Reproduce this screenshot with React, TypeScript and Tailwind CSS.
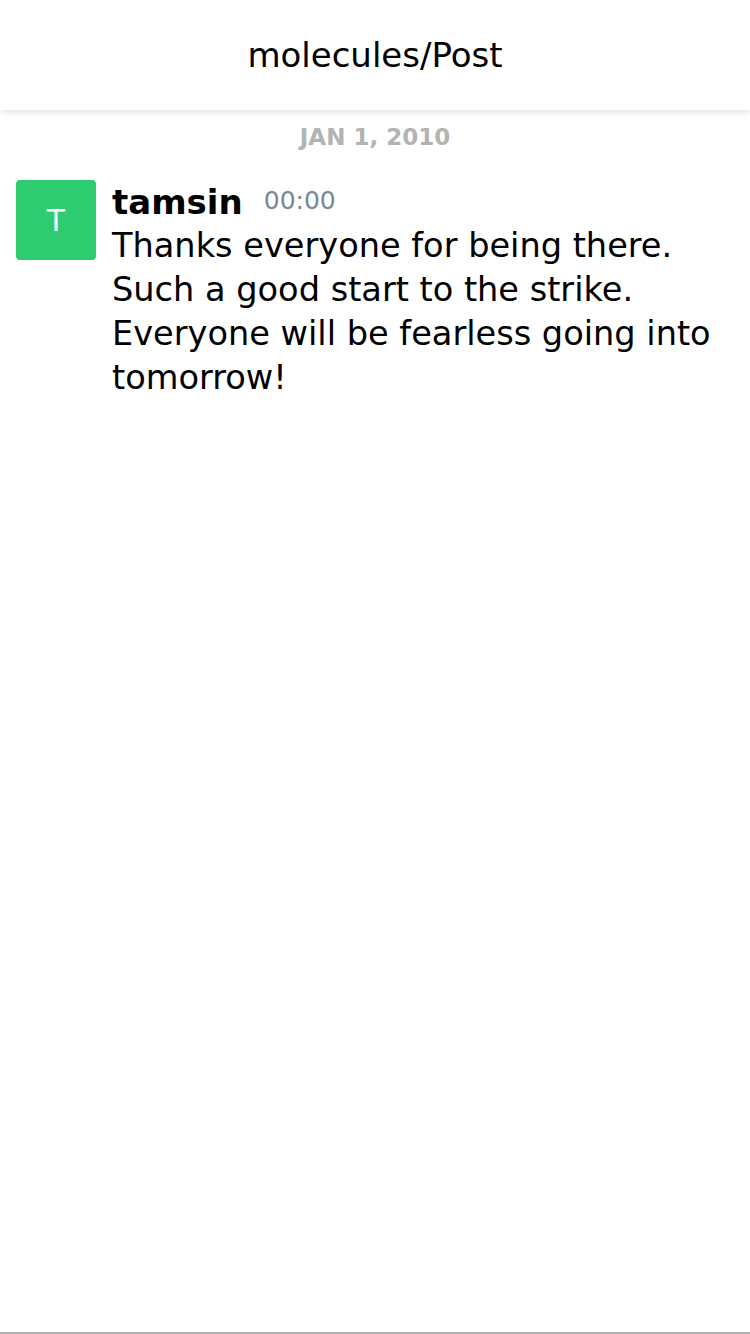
import React from 'react';

const post = {
  author: 'tamsin',
  time: '00:00',
  date: 'JAN 1, 2010',
  body: 'Thanks everyone for being there. Such a good start to the strike. Everyone will be fearless going into tomorrow!',
};

const Header: React.FC<{ title: string }> = ({ title }) => (
  <div className="h-[110px] flex items-center justify-center bg-white shadow-[0_2px_6px_rgba(0,0,0,0.12)] relative z-10">
    <span className="text-[34px] text-black">{title}</span>
  </div>
);

const Post: React.FC = () => (
  <div className="flex gap-4 pl-4 pr-4 pt-[28px]">
    <div className="w-20 h-20 shrink-0 rounded-[4px] bg-[#2ecc71] flex items-center justify-center text-white text-[30px]">
      {post.author.charAt(0).toUpperCase()}
    </div>
    <div className="flex-1 min-w-0">
      <div className="flex items-center gap-[21px] h-[44px]">
        <span className="text-[34px] font-bold text-black leading-[44px]">{post.author}</span>
        <span className="text-[25px] text-[#778899] leading-[30px] -mt-[2px]">{post.time}</span>
      </div>
      <p className="text-[33.6px] leading-[44px] text-black">{post.body}</p>
    </div>
  </div>
);

export default function App() {
  return (
    <div className="h-[1334px] flex flex-col bg-white font-['DejaVu_Sans',sans-serif]">
      <Header title="molecules/Post" />
      <div className="flex-1">
        <div className="text-center pt-[12px] text-[23px] font-bold text-[#b3b3b3] leading-[30px]">
          {post.date}
        </div>
        <Post />
      </div>
      <div className="h-[2px] bg-[#b0b0b0]" />
    </div>
  );
}
